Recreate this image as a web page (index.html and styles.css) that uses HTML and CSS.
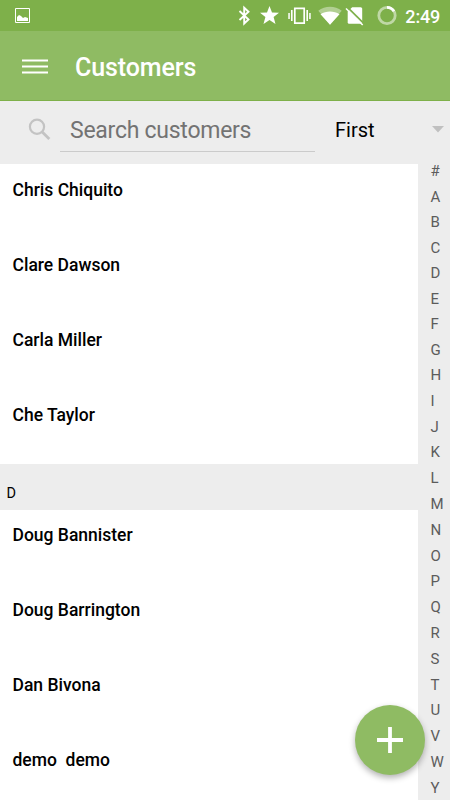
FILE: index.html
```html
<!DOCTYPE html>
<html lang="en">
<head>
<meta charset="utf-8">
<title>Customers</title>
<link rel="stylesheet" href="styles.css">
</head>
<body>
<div class="app">
  <header class="status">
    <svg class="status-icons" width="450" height="31" viewBox="0 0 450 31" fill="#fff">
      <path fill="none" stroke="#fff" d="M15.500 8.500h14v14h-14z"/>
      <path d="M17 21v-4l2-2 2 1 2 2 2-1 3 1v3z"/>
      <path fill="none" stroke="#fff" stroke-width="1.900" d="M239.500 11l9 8.500-4.300 4V7.700l4.300 4-9 8.300"/>
      <path d="M269.500 6l2.500 6.400 7 .400-5.400 4.300 1.900 6.900-6-3.900-6 3.900 1.900-6.900-5.400-4.300 7-.400z"/>
      <path fill="none" stroke="#fff" stroke-width="1.700" d="M294.800 8.300h9.400v14.900h-9.400z"/>
      <path d="M291 10h1.600v11H291zM288.300 13h1.500v6h-1.500zM306.400 10h1.600v11h-1.600zM309.200 13h1.500v6h-1.500z"/>
      <path opacity=".4" d="M318.300 10.800C325 5.400 335 5.400 341.700 10.800L330 24.700z"/>
      <path d="M320.500 14.300c5.500-3.700 13.500-3.700 19 0L330 24.700z"/>
      <path d="M352.200 7.200h8.500q1.500 0 1.500 1.500v13.600q0 1.500-1.500 1.500h-11.500q-1.500 0-1.500-1.500v-10.700z"/>
      <path stroke="#7eb04a" stroke-width="1.800" d="M347.300 7.200L364 23.700"/>
      <path stroke="#fff" stroke-width="1.500" d="M346 8.500L362.700 25"/>
      <circle cx="387" cy="15.500" r="8.200" fill="none" stroke="#fff" stroke-opacity=".5" stroke-width="2.800"/>
      <path fill="none" stroke="#fff" stroke-width="2.800" d="M387 7.300a8.200 8.200 0 0 1 7 4"/>
    </svg>
    <span class="clock">2:49</span>
  </header>
  <div class="toolbar">
    <svg class="menu" width="26" height="16" viewBox="0 0 26 16"><path stroke="#fff" stroke-width="2.200" d="M0 1.500h26M0 7.500h26M0 13.500h26"/></svg>
    <h1 class="title">Customers</h1>
  </div>
  <div class="filters">
    <svg class="search-icon" width="24" height="24" viewBox="0 0 24 24" fill="none" stroke="#c3c3c3"><circle cx="10" cy="8.700" r="7.100" stroke-width="2.200"/><path stroke-width="2.800" d="M15 13.700l7.300 7.300"/></svg>
    <div class="search">Search customers</div>
    <div class="sort">First</div>
    <svg class="arrow" width="12" height="7" viewBox="0 0 12 7"><path fill="#c0c0c0" d="M0 0h12L6 6.500z"/></svg>
  </div>
  <div class="content">
    <main class="list">
      <div class="row">Chris Chiquito</div>
      <div class="row">Clare Dawson</div>
      <div class="row">Carla Miller</div>
      <div class="row">Che Taylor</div>
      <div class="section">D</div>
      <div class="row">Doug Bannister</div>
      <div class="row">Doug Barrington</div>
      <div class="row">Dan Bivona</div>
      <div class="row">demo&nbsp; demo</div>
    </main>
    <nav class="index">
      <span>#</span><span>A</span><span>B</span><span>C</span><span>D</span><span>E</span><span>F</span><span>G</span><span>H</span><span>I</span><span>J</span><span>K</span><span>L</span><span>M</span><span>N</span><span>O</span><span>P</span><span>Q</span><span>R</span><span>S</span><span>T</span><span>U</span><span>V</span><span>W</span><span>Y</span>
    </nav>
  </div>
  <div class="fab"><svg width="26" height="26" viewBox="0 0 26 26"><path stroke="#fff" stroke-width="3.800" d="M0 13h26M13 0v26"/></svg></div>
</div>
</body>
</html>
```
FILE: styles.css
```css
* { box-sizing: border-box; }
body { margin: 0; font-family: Roboto, sans-serif; color: #000; }
.app { position: relative; width: 450px; height: 800px; overflow: hidden; background: #ededed; display: flex; flex-direction: column; }
.status { position: relative; flex: none; height: 31px; background: #7eb04a; display: flex; justify-content: flex-end; padding-right: 10px; }
.status-icons { position: absolute; left: 0; top: 0; }
.clock { color: #fff; font-size: 18px; font-weight: 500; line-height: 33px; letter-spacing: -0.2px; }
.toolbar { flex: none; height: 70px; background: #8fbb63; border-bottom: 1px solid #7eb04a; display: flex; align-items: center; padding: 3px 0 0 22px; }
.menu { flex: none; margin-right: 27px; }
.title { margin: 1px 0 0; color: #fff; font-size: 25px; font-weight: 500; line-height: 32px; letter-spacing: -0.1px; }
.filters { flex: none; height: 63px; display: flex; align-items: flex-start; padding-left: 27px; }
.search-icon { flex: none; margin: 17px 9px 0 0; }
.search { flex: none; width: 255px; height: 51px; padding: 14px 0 0 10px; border-bottom: 1px solid #cbcbcb; color: #737373; font-size: 23px; line-height: 31px; letter-spacing: -0.26px; white-space: nowrap; }
.sort { flex: none; width: 117px; padding: 14px 0 0 20px; font-size: 20px; line-height: 30px; }
.arrow { flex: none; margin-top: 25px; }
.content { flex: 1; min-height: 0; display: flex; }
.list { width: 418px; overflow: hidden; }
.row { height: 75px; background: #fff; padding: 14px 0 0 12.5px; font-size: 17.5px; font-weight: 500; line-height: 24px; }
.section { height: 46px; padding: 19px 0 0 6.5px; font-size: 14.5px; line-height: 22px; }
.section ~ .row { padding-top: 13px; }
.index { flex: 1; padding-left: 12.5px; margin-top: -6px; display: flex; flex-direction: column; color: #5c5c5c; font-size: 15px; }
.index span { flex: none; height: 25.5px; line-height: 26px; }
.index span:nth-child(n+9) { height: 25.8px; }
.fab { position: absolute; left: 355px; top: 705px; width: 70px; height: 70px; border-radius: 50%; background: #8fbb63; box-shadow: 0 3px 6px rgba(0,0,0,.3); display: flex; align-items: center; justify-content: center; }
```
